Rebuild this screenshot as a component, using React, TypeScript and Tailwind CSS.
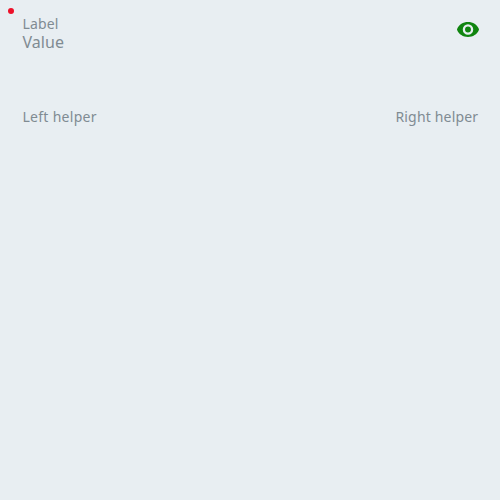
export default function App() {
  return (
    <main className="relative h-[500px] w-[500px] bg-[#e8eef2] px-[22px] pt-[15px] font-['Noto_Sans',sans-serif] text-[14px] leading-[18px] text-[#808b92]">
      <span className="absolute left-2 top-2 h-1.5 w-1.5 rounded-full bg-[#ed1029]" />
      <div className="flex h-[93px] items-start justify-between">
        <div className="flex flex-col">
          <label className="ml-[0.4px] tracking-[0.15px]">Label</label>
          <span className="ml-[0.4px] text-base leading-[18px] tracking-[0.1px]">Value</span>
        </div>
        <svg className="mt-0.5 -mr-0.5 h-6 w-6" viewBox="0 -0.5 24 24">
          <path fill="#108510" d="M12 4.5C7 4.5 3 7.2 1.2 11.2Q.8 12 1.2 12.8C3 16.8 7 19.5 12 19.5s9-2.7 10.8-6.7q.4-.8 0-1.6C21 7.2 17 4.5 12 4.5z" />
          <circle cx="12" cy="12" r="4.1" fill="none" stroke="#e8eef2" strokeWidth="2.3" />
        </svg>
      </div>
      <div className="flex justify-between">
        <span className="ml-[0.4px] tracking-[0.3px]">Left helper</span>
        <span className="-mr-[0.3px] tracking-[0.18px]">Right helper</span>
      </div>
    </main>
  );
}
